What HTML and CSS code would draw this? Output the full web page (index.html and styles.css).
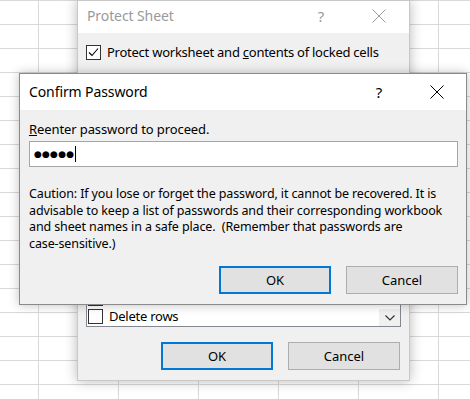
FILE: index.html
```html
<!DOCTYPE html>
<html lang="en">
<head>
<meta charset="utf-8">
<title>Confirm Password</title>
<link rel="stylesheet" href="styles.css">
</head>
<body>
<div class="sheet">
  <div class="dialog back">
    <div class="titlebar">
      <span class="title">Protect Sheet</span>
      <span class="tb-btn help">?</span>
      <span class="tb-btn close">
        <svg width="14" height="14" viewBox="0 0 14 14"><path d="M0.5 0.5 L13.5 13.5 M13.5 0.5 L0.5 13.5" stroke="currentColor" stroke-width="1" fill="none"/></svg>
      </span>
    </div>
    <div class="body">
      <div class="check-row">
        <span class="cb">
          <svg width="13" height="13" viewBox="0 0 13 13"><path d="M2 6.5 L5 9.5 L11 2.5" stroke="#000" stroke-width="1.1" fill="none"/></svg>
        </span>
        <span>Protect worksheet and <u>c</u>ontents of locked cells</span>
      </div>
      <div class="fill">
        <div class="listbox">
          <div class="items">
            <div class="item"><span class="cb"></span><span>Delete columns</span></div>
            <div class="item"><span class="cb"></span><span>Delete rows</span></div>
          </div>
          <div class="scroll">
            <svg width="10" height="6" viewBox="0 0 10 6"><path d="M0.5 0.5 L5 5 L9.5 0.5" stroke="#333" stroke-width="1.2" fill="none"/></svg>
          </div>
        </div>
      </div>
      <div class="buttons back-buttons">
        <button class="btn default">OK</button>
        <button class="btn">Cancel</button>
      </div>
    </div>
  </div>

  <div class="dialog front">
    <div class="titlebar">
      <span class="title">Confirm Password</span>
      <span class="tb-btn help">?</span>
      <span class="tb-btn close">
        <svg width="14" height="14" viewBox="0 0 14 14"><path d="M0.5 0.5 L13.5 13.5 M13.5 0.5 L0.5 13.5" stroke="currentColor" stroke-width="1" fill="none"/></svg>
      </span>
    </div>
    <div class="body">
      <div class="label"><u>R</u>eenter password to proceed.</div>
      <div class="input"><span class="dots">●●●●●</span><span class="caret"></span></div>
      <p class="caution">Caution: If you lose or forget the password, it cannot be recovered. It is<br>advisable to keep a list of passwords and their corresponding workbook<br>and sheet names in a safe place.&nbsp; (Remember that passwords are<br>case-sensitive.)</p>
      <div class="buttons front-buttons">
        <button class="btn default">OK</button>
        <button class="btn">Cancel</button>
      </div>
    </div>
  </div>
</div>
</body>
</html>
```

FILE: styles.css
```css
* { box-sizing: border-box; }
html, body {
  margin: 0;
  padding: 0;
}
body {
  width: 470px;
  height: 399px;
  overflow: hidden;
  font-family: "Noto Sans", "Open Sans", sans-serif;
  font-size: 13px;
  letter-spacing: -0.25px;
  color: #000;
  background-color: #fff;
  background-image:
    linear-gradient(to right, #d9d9d9 1px, transparent 1px),
    linear-gradient(to bottom, #d9d9d9 1px, transparent 1px);
  background-size: 80px 100%, 100% 24px;
  background-position: 38px 0, 0 0;
}
.sheet {
  position: relative;
  width: 470px;
  height: 399px;
}
.dialog {
  position: absolute;
  display: flex;
  flex-direction: column;
  background: #f0f0f0;
}
.back {
  left: 77px;
  top: 0;
  width: 333px;
  height: 381px;
  border: 1px solid #c8c8c8;
  box-shadow: 0 0 12px rgba(0,0,0,0.28);
}
.front {
  left: 19px;
  top: 73px;
  width: 448px;
  height: 232px;
  border: 1px solid #8a8a8a;
  box-shadow: 0 0 10px rgba(0,0,0,0.25);
}
.titlebar {
  display: flex;
  align-items: center;
  background: #fff;
  flex: none;
}
.back .titlebar {
  height: 32px;
  padding-left: 9px;
  padding-bottom: 3px;
  color: #9a9a9a;
}
.front .titlebar {
  height: 36px;
  padding-left: 9px;
  padding-bottom: 1px;
  color: #000;
}
.title {
  flex: 1;
  font-size: 14px;
  letter-spacing: -0.1px;
}
.tb-btn {
  display: flex;
  align-items: center;
  justify-content: center;
  font-size: 15px;
}
.back .help { width: 20px; margin-right: 38px; }
.back .close { width: 20px; margin-right: 20px; }
.front .help { width: 20px; margin-right: 38px; }
.front .close { width: 20px; margin-right: 19px; }

.body {
  flex: 1;
  display: flex;
  flex-direction: column;
}
.back .body {
  padding: 9px 8px 10px 8px;
}
.check-row {
  display: flex;
  align-items: center;
  gap: 6px;
  height: 20px;
  font-size: 13px;
}
.cb {
  width: 15px;
  height: 15px;
  border: 1px solid #333;
  background: #fff;
  display: flex;
  align-items: center;
  justify-content: center;
  flex: none;
}
.fill {
  flex: 1;
  display: flex;
  flex-direction: column;
  justify-content: flex-end;
}
.listbox {
  display: flex;
  height: 120px;
  border: 1px solid #828790;
  background: #fff;
  margin-bottom: 15px;
}
.items {
  flex: 1;
  display: flex;
  flex-direction: column;
  justify-content: flex-end;
  padding-left: 1px;
  padding-bottom: 1px;
}
.item {
  display: flex;
  align-items: center;
  gap: 6px;
  height: 18px;
  font-size: 13px;
}
.scroll {
  align-self: flex-end;
  width: 21px;
  height: 17px;
  background: #f0f0f0;
  display: flex;
  align-items: center;
  justify-content: center;
}
.buttons {
  display: flex;
  justify-content: flex-end;
  gap: 15px;
  flex: none;
}
.back-buttons { margin-right: 1px; }
.btn {
  font-family: inherit;
  font-size: 13px;
  letter-spacing: 0;
  color: #000;
  width: 112px;
  height: 28px;
  background: #e1e1e1;
  border: 1px solid #adadad;
  padding: 0;
  margin: 0;
}
.btn.default {
  border: 2px solid #0078d7;
}

.front .body {
  padding: 9px 8px 10px 9px;
}
.label {
  height: 20px;
  line-height: 20px;
  font-size: 13px;
  letter-spacing: -0.1px;
}
.input {
  margin-top: 2px;
  height: 26px;
  border: 1px solid #a6a6a6;
  background: #fff;
  display: flex;
  align-items: center;
  padding-left: 4px;
}
.dots {
  font-family: "DejaVu Sans", sans-serif;
  font-size: 9px;
  letter-spacing: 0.2px;
}
.caret {
  width: 1px;
  height: 16px;
  background: #000;
  margin-left: 1px;
}
.caution {
  margin: 19px 0 0 0;
  font-size: 12.5px;
  letter-spacing: -0.12px;
  line-height: 16.7px;
  white-space: nowrap;
}
.front-buttons {
  margin-top: auto;
}
```
